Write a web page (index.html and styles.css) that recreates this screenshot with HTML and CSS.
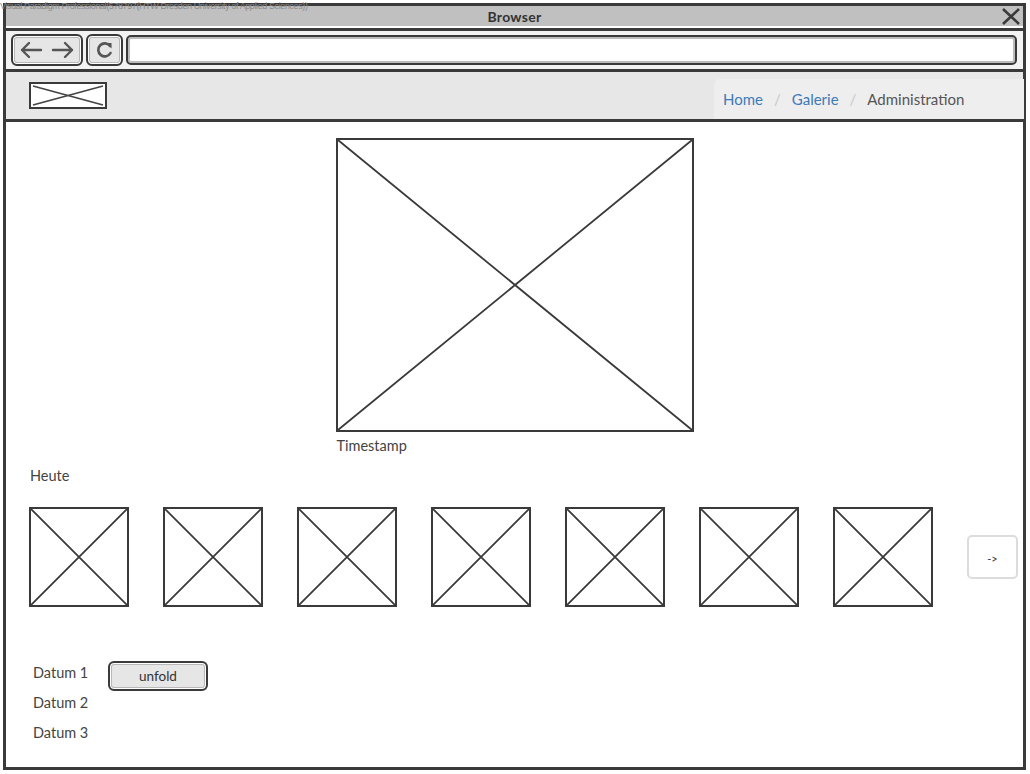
FILE: index.html
```html
<!DOCTYPE html>
<html>
<head>
<meta charset="utf-8">
<link rel="stylesheet" href="styles.css">
</head>
<body>
<div class="watermark">Visual Paradigm Professional(578797(HTW Dresden University of Applied Sciences))</div>
<div class="window">
  <div class="titlebar">
    <span class="title">Browser</span>
    <svg class="close" width="18" height="17" viewBox="0 0 18 17"><path d="M1 1 L17 16 M17 1 L1 16" stroke="#3a3a3a" stroke-width="2.6" fill="none"/></svg>
  </div>
  <div class="toolbar">
    <div class="btn nav-btn">
      <svg width="62" height="20" viewBox="0 0 62 20"><path d="M6 10 H25 M13 3 L6 10 L13 17" stroke="#555" stroke-width="2.4" fill="none" stroke-linecap="round" stroke-linejoin="round"/><path d="M37 10 H56 M49 3 L56 10 L49 17" stroke="#555" stroke-width="2.4" fill="none" stroke-linecap="round" stroke-linejoin="round"/></svg>
    </div>
    <div class="btn refresh-btn">
      <svg width="20" height="20" viewBox="0 0 20 20"><path d="M15 6 A6.5 6.5 0 1 0 15.5 13" stroke="#555" stroke-width="2.6" fill="none" stroke-linecap="round"/><path d="M11 3 L16.5 3 L16.5 8.5 Z" fill="#555"/></svg>
    </div>
    <div class="url"></div>
  </div>
  <div class="navbar">
    <div class="logo">
      <svg width="74" height="23" viewBox="0 0 74 23" preserveAspectRatio="none"><path d="M2 2 L72 21 M72 2 L2 21" stroke="#444" stroke-width="1.8"/></svg>
    </div>
    <div class="crumbs">
      <a class="crumb link">Home</a><span class="sep">/</span><a class="crumb link">Galerie</a><span class="sep">/</span><span class="crumb current">Administration</span>
    </div>
  </div>
  <div class="content">
    <div class="hero">
      <div class="hero-inner">
        <div class="placeholder big">
          <svg viewBox="0 0 100 100" preserveAspectRatio="none"><path d="M0 0 L100 100 M100 0 L0 100" stroke="#3a3a3a" stroke-width="1.8" vector-effect="non-scaling-stroke"/></svg>
        </div>
        <div class="label timestamp">Timestamp</div>
      </div>
    </div>
    <div class="label heute">Heute</div>
    <div class="thumbs">
      <div class="placeholder thumb"><svg viewBox="0 0 100 100" preserveAspectRatio="none"><path d="M0 0 L100 100 M100 0 L0 100" stroke="#3a3a3a" stroke-width="1.8" vector-effect="non-scaling-stroke"/></svg></div>
      <div class="placeholder thumb"><svg viewBox="0 0 100 100" preserveAspectRatio="none"><path d="M0 0 L100 100 M100 0 L0 100" stroke="#3a3a3a" stroke-width="1.8" vector-effect="non-scaling-stroke"/></svg></div>
      <div class="placeholder thumb"><svg viewBox="0 0 100 100" preserveAspectRatio="none"><path d="M0 0 L100 100 M100 0 L0 100" stroke="#3a3a3a" stroke-width="1.8" vector-effect="non-scaling-stroke"/></svg></div>
      <div class="placeholder thumb"><svg viewBox="0 0 100 100" preserveAspectRatio="none"><path d="M0 0 L100 100 M100 0 L0 100" stroke="#3a3a3a" stroke-width="1.8" vector-effect="non-scaling-stroke"/></svg></div>
      <div class="placeholder thumb"><svg viewBox="0 0 100 100" preserveAspectRatio="none"><path d="M0 0 L100 100 M100 0 L0 100" stroke="#3a3a3a" stroke-width="1.8" vector-effect="non-scaling-stroke"/></svg></div>
      <div class="placeholder thumb"><svg viewBox="0 0 100 100" preserveAspectRatio="none"><path d="M0 0 L100 100 M100 0 L0 100" stroke="#3a3a3a" stroke-width="1.8" vector-effect="non-scaling-stroke"/></svg></div>
      <div class="placeholder thumb"><svg viewBox="0 0 100 100" preserveAspectRatio="none"><path d="M0 0 L100 100 M100 0 L0 100" stroke="#3a3a3a" stroke-width="1.8" vector-effect="non-scaling-stroke"/></svg></div>
      <div class="next">-&gt;</div>
    </div>
    <div class="dates">
      <div class="date-row"><span class="label date">Datum 1</span><span class="btn unfold">unfold</span></div>
      <div class="date-row"><span class="label date">Datum 2</span></div>
      <div class="date-row"><span class="label date">Datum 3</span></div>
    </div>
  </div>
</div>
</body>
</html>
```
FILE: styles.css
```css
* { box-sizing: border-box; }
html, body { margin: 0; padding: 0; background: #fff; }
body {
  font-family: Lato, "Open Sans", sans-serif;
  color: #444;
  width: 1030px;
  height: 774px;
  overflow: hidden;
  position: relative;
}
.watermark {
  position: absolute;
  left: 0;
  top: 1px;
  font-family: "Liberation Sans", Arial, sans-serif;
  font-size: 9px;
  line-height: 10px;
  color: #8a8a8a;
  letter-spacing: -0.4px;
  z-index: 2;
  white-space: nowrap;
}
.window {
  margin: 3px 0 0 3px;
  width: 1023px;
  height: 767px;
  border: 3px solid #3a3a3a;
  display: flex;
  flex-direction: column;
}
.titlebar {
  height: 20px;
  margin: 0;
  background: #c0c0c0;
  display: flex;
  align-items: center;
  justify-content: center;
  position: relative;
}
.title {
  font-weight: 700;
  font-size: 14px;
  color: #333;
  letter-spacing: 0.3px;
}
.close {
  position: absolute;
  right: 3px;
  top: 2px;
}
.toolbar {
  margin-top: 2px;
  border-top: 3px solid #3a3a3a;
  height: 41px;
  background: #f3f3f3;
  display: flex;
  align-items: center;
  padding: 0 6px 0 5px;
  gap: 3px;
}
.btn {
  background: #e6e6e6;
  border: 2px solid #3a3a3a;
  border-radius: 6px;
  box-shadow: inset 0 0 0 1px #fff, inset 0 0 0 2px #b8b8b8;
  display: flex;
  align-items: center;
  justify-content: center;
}
.nav-btn { width: 72px; height: 32px; }
.refresh-btn { width: 37px; height: 32px; }
.url {
  flex: 1;
  height: 30px;
  background: #fff;
  border: 2px solid #3a3a3a;
  border-radius: 5px;
  box-shadow: inset 0 0 0 2px #bcbcbc;
}
.navbar {
  border-top: 3px solid #3a3a3a;
  border-bottom: 3px solid #3a3a3a;
  height: 53px;
  background: #e7e7e7;
  display: flex;
  justify-content: space-between;
  align-items: flex-end;
  padding-left: 23px;
}
.logo {
  align-self: center;
  width: 78px;
  height: 27px;
  border: 2px solid #3a3a3a;
  background: #fff;
  margin-top: -1px;
}
.logo svg { display: block; }
.crumbs {
  width: 310px;
  height: 40px;
  margin-right: -1px;
  background: #eeeeee;
  border-radius: 6px 0 0 0;
  display: flex;
  align-items: center;
  padding-left: 9px;
  font-size: 15px;
}
.crumb.link { color: #3d7ab8; }
.crumb.current { color: #555; }
.sep { color: #c8c8c8; margin: 0 11px; }
.content {
  flex: 1;
  padding: 16px 0 0 23px;
}
.hero { display: flex; justify-content: center; margin-left: -23px; }
.hero-inner { width: 358px; }
.placeholder {
  border: 2px solid #3a3a3a;
  background: #fff;
}
.placeholder svg { display: block; width: 100%; height: 100%; }
.big { width: 358px; height: 294px; }
.label { font-size: 14.5px; color: #444; line-height: 18px; }
.timestamp { margin-top: 5px; padding-left: 1px; }
.heute { margin-top: 12px; padding-left: 1px; }
.thumbs {
  margin-top: 22px;
  display: flex;
  align-items: center;
  gap: 34px;
}
.thumb { width: 100px; height: 100px; }
.next {
  margin-left: 0;
  width: 51px;
  height: 44px;
  border: 2px solid #dcdcdc;
  border-radius: 5px;
  display: flex;
  align-items: center;
  justify-content: center;
  font-size: 11px;
  color: #333;
  padding-top: 2px;
}
.dates {
  margin-top: 54px;
  padding-left: 4px;
}
.date-row {
  height: 30px;
  display: flex;
  align-items: center;
}
.date { width: 75px; line-height: 30px; margin-top: -6px; }
.unfold {
  width: 100px;
  height: 30px;
  font-size: 13.5px;
  color: #333;
}
```
